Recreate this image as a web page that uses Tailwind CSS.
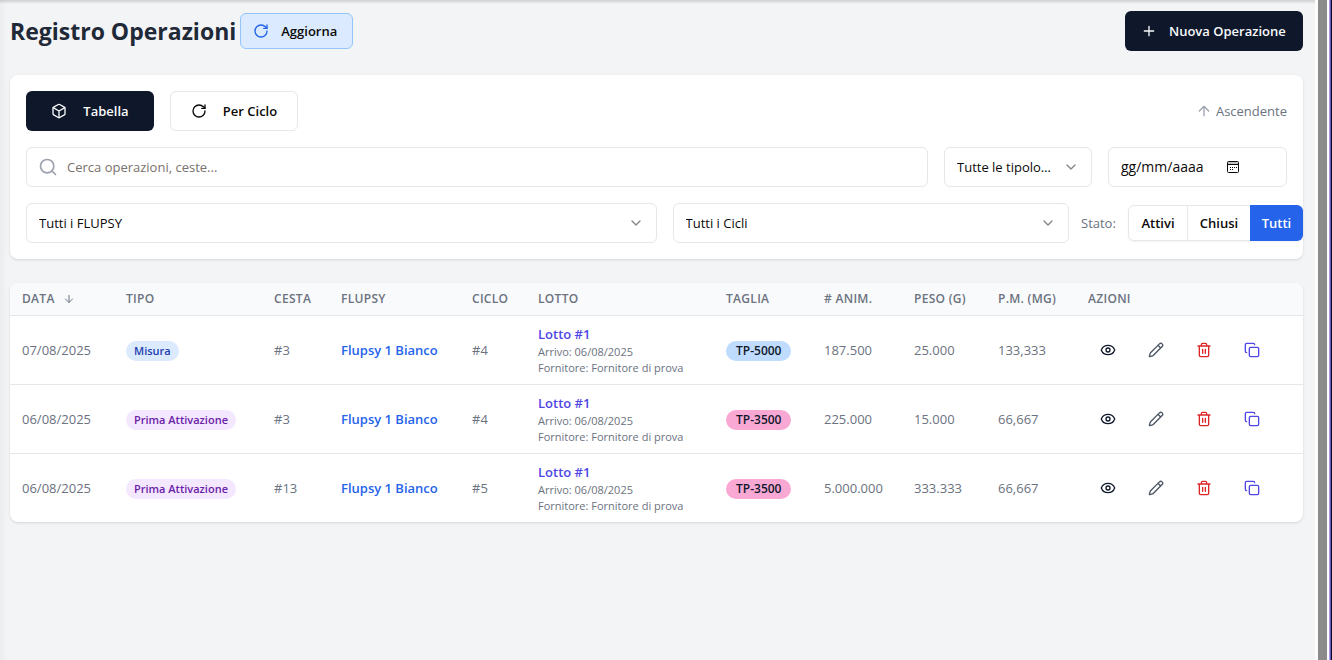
<!DOCTYPE html>
<html lang="it">
<head>
<meta charset="utf-8">
<meta name="viewport" content="width=device-width, initial-scale=1">
<title>Registro Operazioni</title>
<script src="https://cdn.jsdelivr.net/npm/@tailwindcss/browser@4"></script>
</head>
<body class="flex min-h-screen bg-[#f3f4f6] font-['Open_Sans','Noto_Sans',sans-serif] text-[13px] leading-5 text-[#0c0a09]">
<svg class="hidden" aria-hidden="true">
  <symbol id="refresh" viewBox="0 0 24 24"><path d="M21 12a9 9 0 1 1-9-9c2.52 0 4.93 1 6.74 2.74L21 8"/><path d="M21 3v5h-5"/></symbol>
  <symbol id="plus" viewBox="0 0 24 24"><path d="M5 12h14M12 5v14"/></symbol>
  <symbol id="box" viewBox="0 0 24 24"><path d="M21 8a2 2 0 0 0-1-1.73l-7-4a2 2 0 0 0-2 0l-7 4A2 2 0 0 0 3 8v8a2 2 0 0 0 1 1.73l7 4a2 2 0 0 0 2 0l7-4A2 2 0 0 0 21 16Z"/><path d="m3.3 7 8.7 5 8.7-5M12 22V12"/></symbol>
  <symbol id="up" viewBox="0 0 24 24"><path d="m5 12 7-7 7 7M12 19V5"/></symbol>
  <symbol id="down" viewBox="0 0 24 24"><path d="M12 5v14M19 12l-7 7-7-7"/></symbol>
  <symbol id="search" viewBox="0 0 24 24"><circle cx="11" cy="11" r="8"/><path d="m21 21-4.300-4.300"/></symbol>
  <symbol id="chevron" viewBox="0 0 24 24"><path d="m6 9 6 6 6-6"/></symbol>
  <symbol id="calendar" viewBox="0 0 16 16"><rect x="2.500" y="2.500" width="11" height="11" rx="1"/><path d="M3 4h10" stroke-opacity=".5"/><path d="M2.500 5.500h11"/><path d="M5 8.500h1M7 8.500h1M9 8.500h1M11 8.500h1M5 10.500h1M7 10.500h1"/></symbol>
  <symbol id="eye" viewBox="0 0 24 24"><path d="M2.06 12.35a1 1 0 0 1 0-.7 10.75 10.75 0 0 1 19.88 0 1 1 0 0 1 0 .7 10.75 10.75 0 0 1-19.88 0"/><circle cx="12" cy="12" r="3"/></symbol>
  <symbol id="pencil" viewBox="0 0 24 24"><path d="M21.17 6.81a1 1 0 0 0-3.98-3.98L3.84 16.17a2 2 0 0 0-.5.83l-1.32 4.35a.5.5 0 0 0 .62.62l4.36-1.32a2 2 0 0 0 .83-.5zM15 5l4 4"/></symbol>
  <symbol id="trash" viewBox="0 0 24 24"><path d="M3 6h18M19 6v14c0 1-1 2-2 2H7c-1 0-2-1-2-2V6M8 6V4c0-1 1-2 2-2h4c1 0 2 1 2 2v2M10 11v6M14 11v6"/></symbol>
  <symbol id="copy" viewBox="0 0 24 24"><rect x="8" y="8" width="14" height="14" rx="2"/><path d="M4 16c-1.1 0-2-.9-2-2V4c0-1.100.9-2 2-2h10c1.100 0 2 .9 2 2"/></symbol>
</svg>

<main class="relative min-w-0 flex-1 pt-[11px] pr-3 pl-[10px]">
  <div class="absolute inset-x-0 top-0 h-1 bg-linear-to-b from-black/15 to-transparent"></div>
  <div class="absolute inset-y-0 left-0 w-2 bg-linear-to-r from-black/3 to-transparent"></div>

  <header class="mb-6 flex items-center justify-between">
    <div class="flex items-center gap-1">
      <h1 class="text-[23px] leading-8 font-bold text-[#1f2937]">Registro Operazioni</h1>
      <button class="flex h-9 w-[113px] items-center gap-3 rounded-md border border-[#93c5fd] bg-[#dbeafe] px-3 font-semibold">
        <svg class="size-4 fill-none stroke-[#2563eb] stroke-2" stroke-linecap="round" stroke-linejoin="round"><use href="#refresh"/></svg>Aggiorna
      </button>
    </div>
    <button class="flex h-10 w-[178px] items-center gap-3 rounded-md bg-[#0f172a] px-4 font-semibold text-slate-50">
      <svg class="size-4 fill-none stroke-current stroke-2" stroke-linecap="round" stroke-linejoin="round"><use href="#plus"/></svg>Nuova Operazione
    </button>
  </header>

  <section class="mb-6 flex flex-col gap-4 rounded-lg bg-white p-4 shadow-sm">
    <div class="flex items-center justify-between">
      <div class="flex gap-4">
        <button class="flex h-10 w-32 items-center justify-center gap-4 rounded-md bg-[#0f172a] font-semibold text-slate-50">
          <svg class="size-4 fill-none stroke-current stroke-2" stroke-linecap="round" stroke-linejoin="round"><use href="#box"/></svg>Tabella
        </button>
        <button class="flex h-10 w-32 items-center justify-center gap-4 rounded-md border border-gray-200 bg-white font-semibold">
          <svg class="size-4 fill-none stroke-current stroke-2" stroke-linecap="round" stroke-linejoin="round"><use href="#refresh"/></svg>Per Ciclo
        </button>
      </div>
      <button class="flex items-center gap-1 text-[#6b7280]">
        <svg class="size-4 fill-none stroke-[#9ca3af] stroke-2" stroke-linecap="round" stroke-linejoin="round"><use href="#up"/></svg>Ascendente
      </button>
    </div>

    <div class="flex gap-4">
      <label class="relative min-w-0 flex-1">
        <svg class="absolute top-[10px] left-3 size-5 fill-none stroke-[#9ca3af] stroke-2" stroke-linecap="round" stroke-linejoin="round"><use href="#search"/></svg>
        <input type="text" aria-label="Cerca operazioni" placeholder="Cerca operazioni, ceste..." class="h-10 w-full rounded-md border border-gray-200 bg-white pr-3 pl-10 placeholder:text-[#78716c]">
      </label>
      <div class="relative w-[148px]">
        <select aria-label="Tipologia" class="h-10 w-full appearance-none truncate rounded-md border border-gray-200 bg-white pr-9 pl-3"><option>Tutte le tipologie</option></select>
        <svg class="pointer-events-none absolute top-3 right-[13px] size-4 fill-none stroke-[#858585] stroke-2" stroke-linecap="round" stroke-linejoin="round"><use href="#chevron"/></svg>
      </div>
      <div class="flex h-10 w-[179px] items-center rounded-md border border-gray-200 bg-white px-3">
        <input type="text" aria-label="Data" placeholder="gg/mm/aaaa" class="w-[104px] text-sm placeholder:text-[#0c0a09]">
        <button aria-label="Apri calendario"><svg class="size-4 fill-none stroke-[#0c0a09] stroke-1"><use href="#calendar"/></svg></button>
      </div>
    </div>

    <div class="flex items-center">
      <div class="relative mr-4 w-1/2">
        <select aria-label="FLUPSY" class="h-10 w-full appearance-none rounded-md border border-gray-200 bg-white px-3"><option>Tutti i FLUPSY</option></select>
        <svg class="pointer-events-none absolute top-3 right-[13px] size-4 fill-none stroke-[#858585] stroke-2" stroke-linecap="round" stroke-linejoin="round"><use href="#chevron"/></svg>
      </div>
      <div class="relative mr-3 min-w-0 flex-1">
        <select aria-label="Cicli" class="h-10 w-full appearance-none rounded-md border border-gray-200 bg-white px-3"><option>Tutti i Cicli</option></select>
        <svg class="pointer-events-none absolute top-3 right-[13px] size-4 fill-none stroke-[#858585] stroke-2" stroke-linecap="round" stroke-linejoin="round"><use href="#chevron"/></svg>
      </div>
      <div class="-mr-4 flex items-center">
        <span class="w-[47px] text-[#6b7280]">Stato:</span>
        <div class="flex rounded-md font-semibold shadow-xs">
          <button class="h-9 w-[60px] rounded-l-md border border-gray-200 bg-white">Attivi</button>
          <button class="h-9 w-[62px] border-y border-gray-200 bg-white">Chiusi</button>
          <button class="h-9 w-[53px] rounded-r-md bg-[#2563eb] text-white">Tutti</button>
        </div>
      </div>
    </div>
  </section>

  <section class="overflow-hidden rounded-lg bg-white shadow-sm">
    <table class="w-full table-fixed text-left text-[#6b7280]">
      <colgroup>
        <col class="w-[104px]"><col class="w-[148px]"><col class="w-[67px]"><col class="w-[131px]"><col class="w-[66px]"><col><col class="w-[98px]"><col class="w-[90px]"><col class="w-[84px]"><col class="w-[90px]"><col class="w-[227px]">
      </colgroup>
      <thead class="border-b border-gray-200 bg-[#f9fafb] text-[12px] leading-4 tracking-wide whitespace-nowrap uppercase">
        <tr>
          <th scope="col" class="px-3 py-2 font-semibold"><span class="flex items-center gap-2">Data <svg class="size-3 fill-none stroke-[#6b7280] stroke-2" stroke-linecap="round" stroke-linejoin="round"><use href="#down"/></svg></span></th>
          <th scope="col" class="px-3 py-2 font-semibold">Tipo</th>
          <th scope="col" class="px-3 py-2 font-semibold">Cesta</th>
          <th scope="col" class="px-3 py-2 font-semibold">Flupsy</th>
          <th scope="col" class="px-3 py-2 font-semibold">Ciclo</th>
          <th scope="col" class="px-3 py-2 font-semibold">Lotto</th>
          <th scope="col" class="px-3 py-2 font-semibold">Taglia</th>
          <th scope="col" class="px-3 py-2 font-semibold"># Anim.</th>
          <th scope="col" class="px-3 py-2 font-semibold">Peso (g)</th>
          <th scope="col" class="px-3 py-2 font-semibold">P.M. (mg)</th>
          <th scope="col" class="px-3 py-2 font-semibold">Azioni</th>
        </tr>
      </thead>
      <tbody class="divide-y divide-gray-200 whitespace-nowrap">
        <tr>
          <td class="px-3 py-2">07/08/2025</td>
          <td class="px-3 py-2"><span class="inline-block rounded-full bg-[#dbeafe] px-2 text-[11px] leading-5 font-semibold text-[#1e40af]">Misura</span></td>
          <td class="px-3 py-2">#3</td>
          <td class="px-3 py-2"><a href="#" class="font-semibold text-[#2563eb]">Flupsy 1 Bianco</a></td>
          <td class="px-3 py-2">#4</td>
          <td class="px-3 py-2"><a href="#" class="block font-semibold text-[#4f46e5]">Lotto #1</a><div class="text-[11px] leading-4">Arrivo: 06/08/2025</div><div class="text-[11px] leading-4">Fornitore: Fornitore di prova</div></td>
          <td class="px-3 py-2"><span class="inline-block rounded-full bg-[#bfdbfe] px-[10px] text-[12px] leading-5 font-semibold text-[#0f172a]">TP-5000</span></td>
          <td class="px-3 py-2">187.500</td>
          <td class="px-3 py-2">25.000</td>
          <td class="px-3 py-2">133,333</td>
          <td class="px-3 py-2"><div class="flex gap-2">
            <button aria-label="Visualizza" class="flex size-10 items-center justify-center text-[#0f172a]"><svg class="size-4 fill-none stroke-current stroke-2" stroke-linecap="round" stroke-linejoin="round"><use href="#eye"/></svg></button>
            <button aria-label="Modifica" class="flex size-10 items-center justify-center text-[#4b5563]"><svg class="size-4 fill-none stroke-current stroke-2" stroke-linecap="round" stroke-linejoin="round"><use href="#pencil"/></svg></button>
            <button aria-label="Elimina" class="flex size-10 items-center justify-center text-[#dc2626]"><svg class="size-4 fill-none stroke-current stroke-2" stroke-linecap="round" stroke-linejoin="round"><use href="#trash"/></svg></button>
            <button aria-label="Duplica" class="flex size-10 items-center justify-center text-[#4f46e5]"><svg class="size-4 fill-none stroke-current stroke-2" stroke-linecap="round" stroke-linejoin="round"><use href="#copy"/></svg></button>
          </div></td>
        </tr>
        <tr>
          <td class="px-3 py-2">06/08/2025</td>
          <td class="px-3 py-2"><span class="inline-block rounded-full bg-[#f3e8ff] px-2 text-[11px] leading-5 font-semibold text-[#6b21a8]">Prima Attivazione</span></td>
          <td class="px-3 py-2">#3</td>
          <td class="px-3 py-2"><a href="#" class="font-semibold text-[#2563eb]">Flupsy 1 Bianco</a></td>
          <td class="px-3 py-2">#4</td>
          <td class="px-3 py-2"><a href="#" class="block font-semibold text-[#4f46e5]">Lotto #1</a><div class="text-[11px] leading-4">Arrivo: 06/08/2025</div><div class="text-[11px] leading-4">Fornitore: Fornitore di prova</div></td>
          <td class="px-3 py-2"><span class="inline-block rounded-full bg-[#f9a8d4] px-[10px] text-[12px] leading-5 font-semibold text-[#0f172a]">TP-3500</span></td>
          <td class="px-3 py-2">225.000</td>
          <td class="px-3 py-2">15.000</td>
          <td class="px-3 py-2">66,667</td>
          <td class="px-3 py-2"><div class="flex gap-2">
            <button aria-label="Visualizza" class="flex size-10 items-center justify-center text-[#0f172a]"><svg class="size-4 fill-none stroke-current stroke-2" stroke-linecap="round" stroke-linejoin="round"><use href="#eye"/></svg></button>
            <button aria-label="Modifica" class="flex size-10 items-center justify-center text-[#4b5563]"><svg class="size-4 fill-none stroke-current stroke-2" stroke-linecap="round" stroke-linejoin="round"><use href="#pencil"/></svg></button>
            <button aria-label="Elimina" class="flex size-10 items-center justify-center text-[#dc2626]"><svg class="size-4 fill-none stroke-current stroke-2" stroke-linecap="round" stroke-linejoin="round"><use href="#trash"/></svg></button>
            <button aria-label="Duplica" class="flex size-10 items-center justify-center text-[#4f46e5]"><svg class="size-4 fill-none stroke-current stroke-2" stroke-linecap="round" stroke-linejoin="round"><use href="#copy"/></svg></button>
          </div></td>
        </tr>
        <tr>
          <td class="px-3 py-2">06/08/2025</td>
          <td class="px-3 py-2"><span class="inline-block rounded-full bg-[#f3e8ff] px-2 text-[11px] leading-5 font-semibold text-[#6b21a8]">Prima Attivazione</span></td>
          <td class="px-3 py-2">#13</td>
          <td class="px-3 py-2"><a href="#" class="font-semibold text-[#2563eb]">Flupsy 1 Bianco</a></td>
          <td class="px-3 py-2">#5</td>
          <td class="px-3 py-2"><a href="#" class="block font-semibold text-[#4f46e5]">Lotto #1</a><div class="text-[11px] leading-4">Arrivo: 06/08/2025</div><div class="text-[11px] leading-4">Fornitore: Fornitore di prova</div></td>
          <td class="px-3 py-2"><span class="inline-block rounded-full bg-[#f9a8d4] px-[10px] text-[12px] leading-5 font-semibold text-[#0f172a]">TP-3500</span></td>
          <td class="px-3 py-2">5.000.000</td>
          <td class="px-3 py-2">333.333</td>
          <td class="px-3 py-2">66,667</td>
          <td class="px-3 py-2"><div class="flex gap-2">
            <button aria-label="Visualizza" class="flex size-10 items-center justify-center text-[#0f172a]"><svg class="size-4 fill-none stroke-current stroke-2" stroke-linecap="round" stroke-linejoin="round"><use href="#eye"/></svg></button>
            <button aria-label="Modifica" class="flex size-10 items-center justify-center text-[#4b5563]"><svg class="size-4 fill-none stroke-current stroke-2" stroke-linecap="round" stroke-linejoin="round"><use href="#pencil"/></svg></button>
            <button aria-label="Elimina" class="flex size-10 items-center justify-center text-[#dc2626]"><svg class="size-4 fill-none stroke-current stroke-2" stroke-linecap="round" stroke-linejoin="round"><use href="#trash"/></svg></button>
            <button aria-label="Duplica" class="flex size-10 items-center justify-center text-[#4f46e5]"><svg class="size-4 fill-none stroke-current stroke-2" stroke-linecap="round" stroke-linejoin="round"><use href="#copy"/></svg></button>
          </div></td>
        </tr>
      </tbody>
    </table>
  </section>
</main>

<!-- Scrollbar and window edge -->
<div class="flex shrink-0 bg-[#fcfcfc]" aria-hidden="true">
  <div class="mr-[2px] ml-[3px] w-[9px] bg-[#8b8b8b]"></div>
  <div class="w-px bg-[#a99be6]"></div>
  <div class="w-px bg-[#6654b8]"></div>
  <div class="w-px bg-[#0c0820]"></div>
</div>
</body>
</html>
